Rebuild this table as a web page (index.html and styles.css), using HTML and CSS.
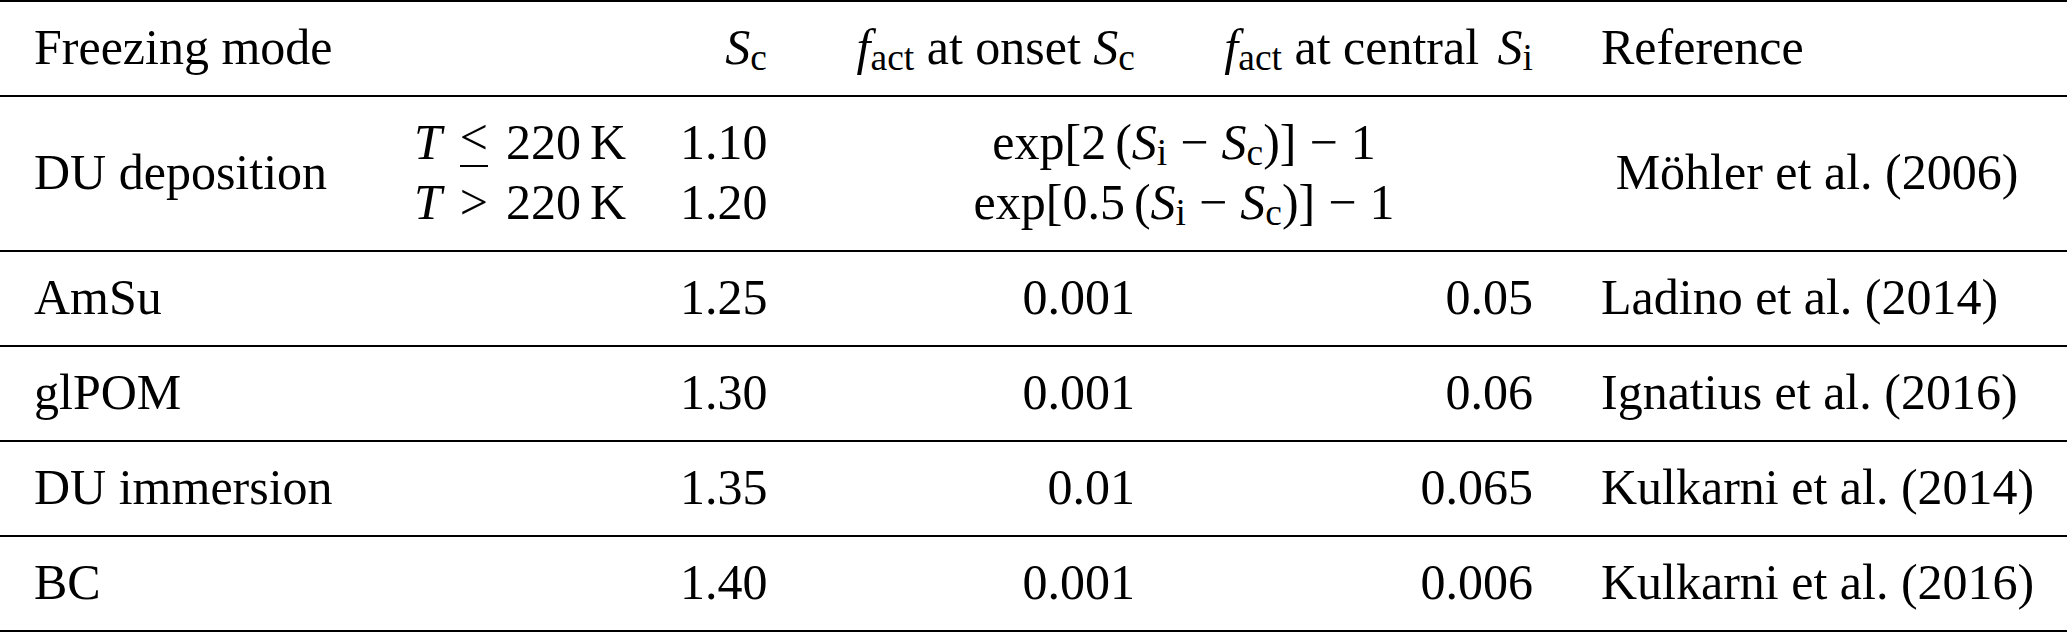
FILE: index.html
```html
<!DOCTYPE html>
<html>
<head>
	<title>Freezing modes</title>
	<link rel="stylesheet" href="styles.css">
</head>
<body>
	<table class="modes">
		<colgroup>
			<col class="w-mode">
			<col class="w-cond">
			<col class="w-sc">
			<col class="w-onset">
			<col class="w-central">
			<col class="w-ref">
		</colgroup>
		<thead>
			<tr>
				<th class="left">Freezing mode</th>
				<th></th>
				<th class="right"><i>S</i><sub>c</sub></th>
				<th class="right"><i>f</i><sub>act</sub> at onset <i>S</i><sub>c</sub></th>
				<th class="right"><i>f</i><sub>act</sub> at central <i class="gap">S</i><sub>i</sub></th>
				<th class="left">Reference</th>
			</tr>
		</thead>
		<tbody>
			<tr>
				<td class="left">DU deposition</td>
				<td class="right">
					<i>T</i><span class="rel"><span class="le">&lt;</span></span>220<span class="thin"></span>K<br>
					<i>T</i><span class="rel">&gt;</span>220<span class="thin"></span>K
				</td>
				<td class="right">1.10<br>1.20</td>
				<td class="mid" colspan="2">
					exp[2<span class="thin"></span>(<i>S</i><sub>i</sub><span class="bin">&minus;</span><i>S</i><sub>c</sub>)]<span class="bin">&minus;</span>1<br>
					exp[0.5<span class="thin"></span>(<i>S</i><sub>i</sub><span class="bin">&minus;</span><i>S</i><sub>c</sub>)]<span class="bin">&minus;</span>1
				</td>
				<td class="mid">M&ouml;hler et al. (2006)</td>
			</tr>
			<tr>
				<td class="left">AmSu</td>
				<td></td>
				<td class="right">1.25</td>
				<td class="right">0.001</td>
				<td class="right">0.05</td>
				<td class="left">Ladino et al. (2014)</td>
			</tr>
			<tr>
				<td class="left">glPOM</td>
				<td></td>
				<td class="right">1.30</td>
				<td class="right">0.001</td>
				<td class="right">0.06</td>
				<td class="left">Ignatius et al. (2016)</td>
			</tr>
			<tr>
				<td class="left">DU immersion</td>
				<td></td>
				<td class="right">1.35</td>
				<td class="right">0.01</td>
				<td class="right">0.065</td>
				<td class="left">Kulkarni et al. (2014)</td>
			</tr>
			<tr>
				<td class="left">BC</td>
				<td></td>
				<td class="right">1.40</td>
				<td class="right">0.001</td>
				<td class="right">0.006</td>
				<td class="left">Kulkarni et al. (2016)</td>
			</tr>
		</tbody>
	</table>
</body>
</html>
```

FILE: styles.css
```css
*{
	margin: 0px;
	padding: 0px;
}
body{
	background: #fff;
	color: #000;
	font-family: "Liberation Serif", "Times New Roman", serif;
}
.modes{
	width: 2067px;
	table-layout: fixed;
	border-collapse: collapse;
	font-size: 50px;
	line-height: 60px;
}
.w-mode{ width: 380px; }
.w-cond{ width: 266px; }
.w-sc{ width: 155px; }
.w-onset{ width: 368px; }
.w-central{ width: 398px; }
.w-ref{ width: 500px; }

.modes tr{
	border-bottom: 2px solid #000;
}
.modes thead tr{
	border-top: 2px solid #000;
}
.modes th,
.modes td{
	font-weight: normal;
	padding: 15px 34px 18px;
	vertical-align: middle;
	white-space: nowrap;
}
.left{ text-align: left; }
.right{ text-align: right; }
.mid{ text-align: center; }

.modes sub{
	font-size: 0.75em;
	line-height: 0;
	vertical-align: -0.16em;
}
.rel{
	margin: 0 0.36em;
}
/* less-or-equal drawn TeX style: raised "<" over a flat bar */
.le{
	display: inline-block;
	line-height: 40px;
	padding-bottom: 8px;
	vertical-align: 0.1em;
	border-bottom: 2px solid #000;
}
.bin{
	margin: 0 0.26em;
}
.thin{
	display: inline-block;
	width: 0.18em;
}
.gap{
	margin-left: 0.12em;
}
```
